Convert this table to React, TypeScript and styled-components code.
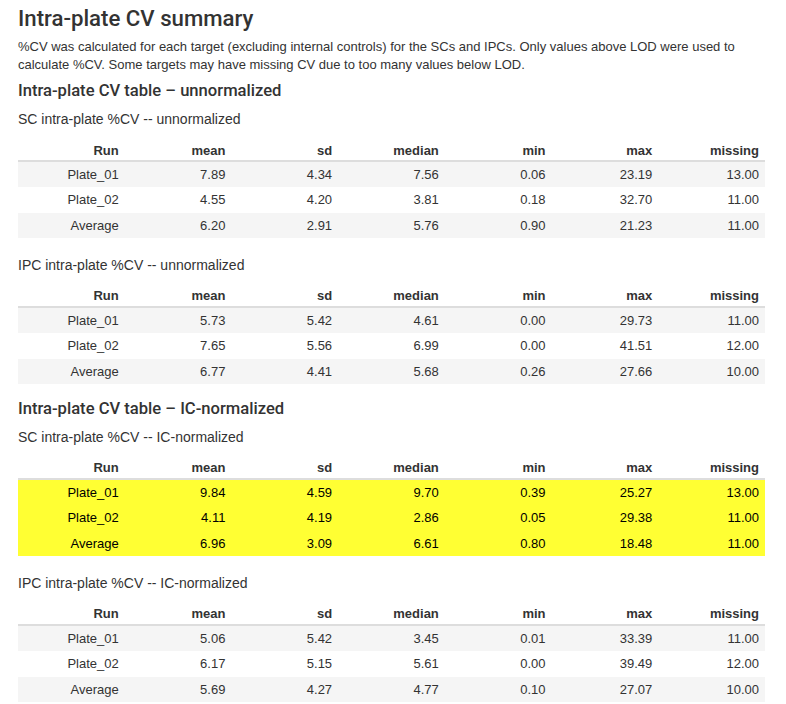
import React from "react";
import styled, { createGlobalStyle } from "styled-components";

const GlobalStyle = createGlobalStyle`
  html, body { margin: 0; padding: 0; background: #ffffff; }
  body {
    font-family: "Liberation Sans", Arial, Helvetica, sans-serif;
    color: #333333;
  }
`;

const Page = styled.div`
  padding: 4px 21px 0 18px;
`;

const Title = styled.h1`
  margin: 0;
  font-family: "Roboto", "Liberation Sans", sans-serif;
  font-weight: 500;
  font-size: 22.2px;
  line-height: 28px;
  color: #333333;
`;

const Intro = styled.p`
  margin: 6px 0 0;
  font-size: 13px;
  line-height: 18px;
`;

const SectionTitle = styled.h3`
  margin: 14px 0 7px;
  font-family: "Roboto", "Liberation Sans", sans-serif;
  font-weight: 500;
  font-size: 16.6px;
  line-height: 22px;
  color: #333333;
  &:first-of-type { margin-top: 6px; }
`;

const Caption = styled.div`
  margin: 17px 0 10.5px;
  font-size: 14px;
  line-height: 20px;
  color: #333333;
`;

const FirstCaption = styled(Caption)`
  margin-top: 0;
`;

const Table = styled.table`
  width: 747px;
  border-collapse: collapse;
  border-spacing: 0;
  margin: 0 0 14px;
  font-size: 13px;
  table-layout: fixed;
`;

const HeadCell = styled.th`
  text-align: right;
  font-weight: bold;
  padding: 2px 6px 1.5px;
  line-height: 17px;
  border-bottom: 2px solid #dddddd;
  color: #333333;
`;

const Row = styled.tr<{ $striped: boolean; $highlight: boolean }>`
  background: ${(p) =>
    p.$highlight ? "#ffff33" : p.$striped ? "#f5f5f5" : "#ffffff"};
  color: ${(p) => (p.$highlight ? "#000000" : "#333333")};
`;

const Cell = styled.td`
  text-align: right;
  padding: 4px 6px;
  line-height: 17.33px;
`;

type RowData = [string, string, string, string, string, string, string];

const columns = ["Run", "mean", "sd", "median", "min", "max", "missing"];

const CvTable = ({ rows, highlight = false }: { rows: RowData[]; highlight?: boolean }) => (
  <Table>
    <thead>
      <tr>
        {columns.map((c) => (
          <HeadCell key={c}>{c}</HeadCell>
        ))}
      </tr>
    </thead>
    <tbody>
      {rows.map((r, i) => (
        <Row key={r[0]} $striped={i % 2 === 0} $highlight={highlight}>
          {r.map((v, j) => (
            <Cell key={j}>{v}</Cell>
          ))}
        </Row>
      ))}
    </tbody>
  </Table>
);

const scUnnorm: RowData[] = [
  ["Plate_01", "7.89", "4.34", "7.56", "0.06", "23.19", "13.00"],
  ["Plate_02", "4.55", "4.20", "3.81", "0.18", "32.70", "11.00"],
  ["Average", "6.20", "2.91", "5.76", "0.90", "21.23", "11.00"],
];
const ipcUnnorm: RowData[] = [
  ["Plate_01", "5.73", "5.42", "4.61", "0.00", "29.73", "11.00"],
  ["Plate_02", "7.65", "5.56", "6.99", "0.00", "41.51", "12.00"],
  ["Average", "6.77", "4.41", "5.68", "0.26", "27.66", "10.00"],
];
const scNorm: RowData[] = [
  ["Plate_01", "9.84", "4.59", "9.70", "0.39", "25.27", "13.00"],
  ["Plate_02", "4.11", "4.19", "2.86", "0.05", "29.38", "11.00"],
  ["Average", "6.96", "3.09", "6.61", "0.80", "18.48", "11.00"],
];
const ipcNorm: RowData[] = [
  ["Plate_01", "5.06", "5.42", "3.45", "0.01", "33.39", "11.00"],
  ["Plate_02", "6.17", "5.15", "5.61", "0.00", "39.49", "12.00"],
  ["Average", "5.69", "4.27", "4.77", "0.10", "27.07", "10.00"],
];

export default function App() {
  return (
    <>
      <GlobalStyle />
      <Page>
        <Title>Intra-plate CV summary</Title>
        <Intro>
          %CV was calculated for each target (excluding internal controls) for the SCs and IPCs. Only
          values above LOD were used to calculate %CV. Some targets may have missing CV due to too
          many values below LOD.
        </Intro>
        <SectionTitle>Intra-plate CV table – unnormalized</SectionTitle>
        <FirstCaption>SC intra-plate %CV -- unnormalized</FirstCaption>
        <CvTable rows={scUnnorm} />
        <Caption>IPC intra-plate %CV -- unnormalized</Caption>
        <CvTable rows={ipcUnnorm} />
        <SectionTitle>Intra-plate CV table – IC-normalized</SectionTitle>
        <FirstCaption>SC intra-plate %CV -- IC-normalized</FirstCaption>
        <CvTable rows={scNorm} highlight />
        <Caption>IPC intra-plate %CV -- IC-normalized</Caption>
        <CvTable rows={ipcNorm} />
      </Page>
    </>
  );
}
